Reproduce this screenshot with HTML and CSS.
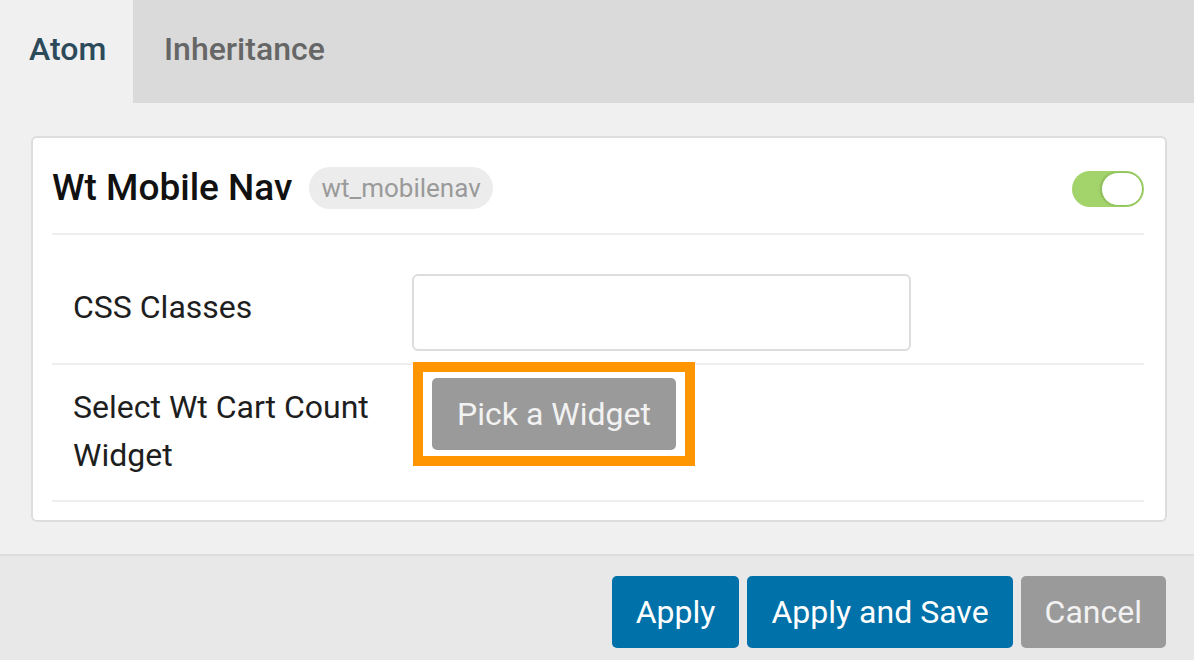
FILE: index.html
```html
<!DOCTYPE html>
<html>
<head>
  <meta charset="UTF-8">
  <title>Atom settings</title>
  <link rel="stylesheet" href="styles.css">
</head>
<body>
  <div id="panel">
    <!--tabs-->
    <div class="tabs">
      <div class="tab active">Atom</div>
      <div class="tab">Inheritance</div>
    </div>

    <!--body-->
    <div class="content">
      <div class="card">
        <div class="card-head">
          <h2 class="title">Wt Mobile Nav</h2>
          <span class="badge">wt_mobilenav</span>
          <span class="toggle on"><span class="knob"></span></span>
        </div>

        <div class="row row-css">
          <label class="label">CSS Classes</label>
          <div class="field"><input class="input" type="text"></div>
        </div>

        <div class="row row-pick">
          <label class="label">Select Wt Cart Count Widget</label>
          <div class="field">
            <div class="highlight">
              <button class="btn btn-grey pick">Pick a Widget</button>
            </div>
          </div>
        </div>
      </div>
    </div>

    <!--footer-->
    <div class="footer">
      <button class="btn btn-blue">Apply</button>
      <button class="btn btn-blue">Apply and Save</button>
      <button class="btn btn-grey">Cancel</button>
    </div>
  </div>
</body>
</html>
```

FILE: styles.css
```css
body{margin:0;font-family:Roboto,"Liberation Sans",sans-serif;background:#f0f0f0;}
h2{margin:0;}

#panel{
  width: 1194px;
  height: 660px;
  display: flex;
  flex-direction: column;
}

/* tabs */
.tabs{
  display: flex;
  height: 103px;
  flex-shrink: 0;
}
.tab{
  display: flex;
  align-items: center;
  padding: 0 31px 6px;
  font-size: 32px;
  font-weight: 500;
  color: #666;
  background: #dadada;
  flex: 1;
}
.tab.active{
  flex: none;
  width: 133px;
  box-sizing: border-box;
  padding-left: 29px;
  color: #2d4a5b;
  background: #f0f0f0;
}

/* card */
.content{
  flex: 1;
  padding: 33px 27px 0 31px;
}
.card{
  background: #fff;
  border: 2px solid #ddd;
  border-radius: 6px;
  padding: 0 21px 18px 19px;
}
.card-head{
  display: flex;
  align-items: center;
  height: 97px;
  border-bottom: 2px solid #eee;
  padding-top: 4px;
  box-sizing: border-box;
}
.title{
  font-size: 37px;
  font-weight: 500;
  color: #111;
}
.badge{
  margin-left: 17px;
  height: 42px;
  line-height: 42px;
  padding: 0 12px;
  border-radius: 21px;
  background: #ececec;
  color: #9a9a9a;
  font-size: 26px;
}
.toggle{
  margin-left: auto;
  margin-top: 2px;
  position: relative;
  width: 72px;
  height: 36px;
  border-radius: 18px;
  background: #a3d36b;
}
.toggle .knob{
  position: absolute;
  top: 1px;
  right: 1px;
  width: 40px;
  height: 32px;
  border: 1px solid #8cc455;
  border-radius: 17px;
  background: #fff;
  box-shadow: -1px 0 2px rgba(0,0,0,.15);
}

/* rows */
.row{
  display: flex;
  align-items: flex-start;
  border-bottom: 2px solid #eee;
}
.label{
  width: 360px;
  flex-shrink: 0;
  box-sizing: border-box;
  padding: 0 20px 0 21px;
  font-size: 32px;
  line-height: 48px;
  color: #1e1e1e;
}
.row-css{
  padding: 39px 0 12px;
}
.row-css .label{
  padding-top: 9px;
}
.input{
  display: block;
  width: 499px;
  height: 77px;
  box-sizing: border-box;
  border: 2px solid #ddd;
  border-radius: 6px;
  outline: none;
}
.row-pick{
  padding: 7px 0 21px;
}
.row-pick .label{
  padding-top: 11px;
}

/* highlighted picker */
.highlight{
  display: inline-block;
  padding: 6px 9px;
  margin-left: 11px;
  background: #fff;
  outline: 10px solid #ff9500;
}

/* buttons */
.btn{
  border: none;
  border-radius: 5px;
  height: 72px;
  padding: 0 24px;
  font-family: Roboto,"Liberation Sans",sans-serif;
  font-size: 32px;
  cursor: pointer;
}
.btn-blue{
  background: #0071a9;
  color: #fff;
}
.btn-grey{
  background: #9a9a9a;
  color: #f2f2f2;
}
.pick{
  display: block;
  width: 244px;
  padding: 0;
}

/* footer */
.footer{
  flex-shrink: 0;
  height: 106px;
  box-sizing: border-box;
  border-top: 2px solid #ddd;
  background: #e8e8e8;
  display: flex;
  justify-content: flex-end;
  align-items: flex-start;
  gap: 8px;
  padding: 20px 28px 0 0;
}
```
